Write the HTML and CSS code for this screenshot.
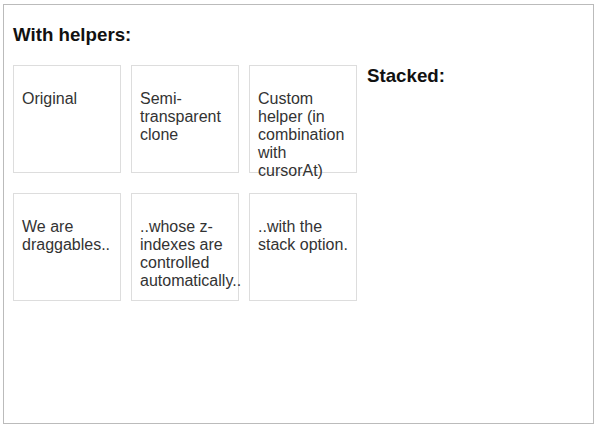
FILE: index.html
```html
<!DOCTYPE html>
<html lang="en">
<head>
    <meta charset="UTF-8">
    <meta name="viewport" content="width=device-width, initial-scale=1.0">
    <title>Draggable - Visual feedback</title>
    <link rel="stylesheet" href="styles.css">
</head>
<body>
    <div class="frame">
        <h3 class="title">With helpers:</h3>
        <div class="row">
            <div class="drag"><p>Original</p></div>
            <div class="drag"><p>Semi-transparent clone</p></div>
            <div class="drag"><p>Custom helper (in combination with cursorAt)</p></div>
            <h3 class="title side">Stacked:</h3>
        </div>
        <div class="row set">
            <div class="drag"><p>We are draggables..</p></div>
            <div class="drag"><p>..whose z-indexes are controlled automatically..</p></div>
            <div class="drag"><p>..with the stack option.</p></div>
        </div>
    </div>
</body>
</html>
```

FILE: styles.css
```css
body {
    margin: 0;
    background: #fff;
    font-family: "Liberation Sans", Arial, sans-serif;
}
.frame {
    box-sizing: border-box;
    width: 591px;
    height: 420px;
    margin: 4px 3px;
    border: 1px solid #bbb;
    padding: 0 9px;
}
.title {
    margin: 19px 0 20px 0;
    font-size: 18.72px;
    font-weight: bold;
    color: #111;
    line-height: 21px;
}
.row {
    display: flex;
    align-items: flex-start;
    gap: 10px;
}
.set {
    margin-top: 20px;
}
.title.side {
    margin: 0;
}
.drag {
    width: 90px;
    height: 90px;
    padding: 8px;
    border: 1px solid #ddd;
    color: #333;
    font-size: 16px;
    flex: none;
}
.drag p {
    margin: 0;
    padding: 16px 0;
}
```
